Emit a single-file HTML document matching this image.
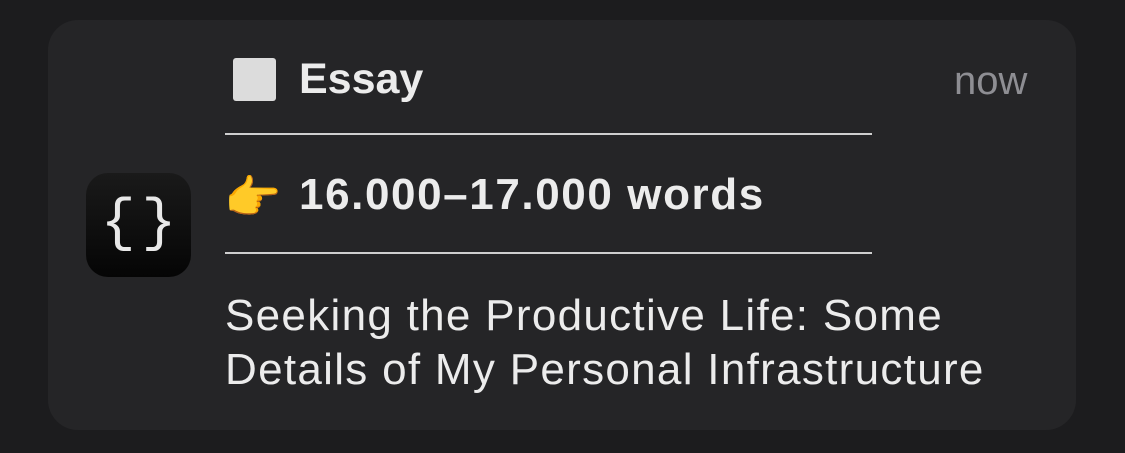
<!DOCTYPE html>
<html><head><meta charset="utf-8"><style>
html,body{margin:0;padding:0;background:#1c1c1e;width:1125px;height:453px;overflow:hidden;font-family:"Liberation Sans",sans-serif}
.card{position:absolute;left:48px;top:20px;width:1028px;height:410px;border-radius:30px;background:#252527}
.icon{position:absolute;left:86px;top:173px;width:105px;height:104px;border-radius:22px;background:linear-gradient(#1a1a1a,#050505);color:#e8e8e8;font-family:"Liberation Mono",monospace;font-size:58px;line-height:104px;text-align:center;letter-spacing:6px;text-indent:6px}
.t{position:absolute;color:#ececec;white-space:nowrap}
.line{position:absolute;left:225px;width:647px;height:2px;background:#cfcfcf}
.sq{position:absolute;left:233px;top:58px;width:43px;height:43px;border-radius:3px;background:#dcdcdc}
</style></head><body>
<div class="card"></div>
<div class="icon">{}</div>
<div class="sq"></div>
<div class="t" style="left:299px;top:55px;font-size:43px;font-weight:bold">Essay</div>
<div class="t" style="left:954px;top:59px;font-size:40px;color:#8e8e93">now</div>
<div class="line" style="top:133px"></div>
<div class="t" style="left:224px;top:170px;font-size:46px">👉</div>
<div class="t" style="left:299px;top:170px;font-size:44px;font-weight:bold;letter-spacing:1.6px">16.000–17.000 words</div>
<div class="line" style="top:252px"></div>
<div class="t" style="left:225px;top:289px;font-size:44px;line-height:54px;letter-spacing:1.3px">Seeking the Productive Life: Some<br>Details of My Personal Infrastructure</div>
</body></html>
